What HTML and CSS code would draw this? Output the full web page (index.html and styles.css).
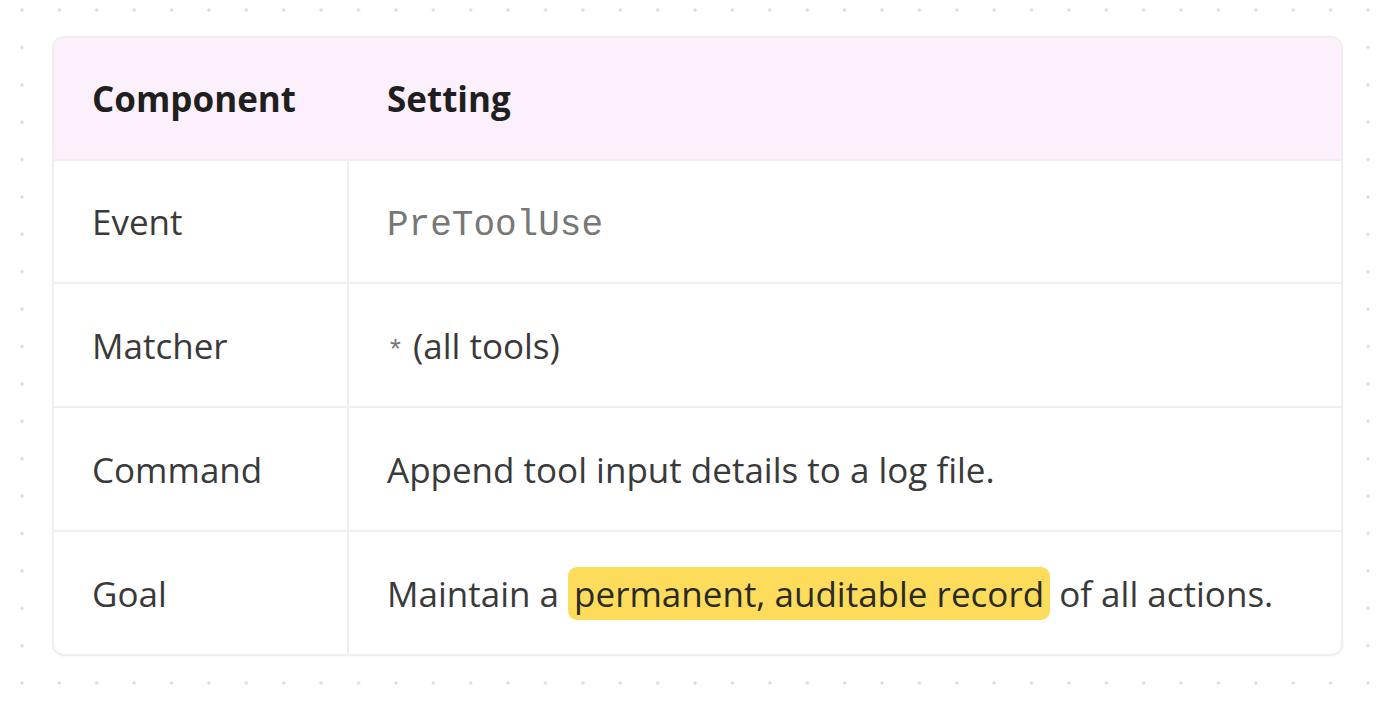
FILE: index.html
```html
<!DOCTYPE html>
<html lang="en">
<head>
    <meta charset="UTF-8">
    <meta name="viewport" content="width=device-width, initial-scale=1.0">
    <title>Hook Settings</title>
    <link rel="stylesheet" href="styles.css">
</head>
<body>
    <div class="board">
        <table class="settings">
            <thead>
                <tr>
                    <th class="col-name">Component</th>
                    <th>Setting</th>
                </tr>
            </thead>
            <tbody>
                <tr>
                    <td class="col-name">Event</td>
                    <td><code>PreToolUse</code></td>
                </tr>
                <tr>
                    <td class="col-name">Matcher</td>
                    <td><code class="star">*</code> (all tools)</td>
                </tr>
                <tr>
                    <td class="col-name">Command</td>
                    <td>Append tool input details to a log file.</td>
                </tr>
                <tr>
                    <td class="col-name">Goal</td>
                    <td>Maintain a <mark>permanent, auditable record</mark> of all actions.</td>
                </tr>
            </tbody>
        </table>
    </div>
</body>
</html>
```

FILE: styles.css
```css
body {
    margin: 0;
    padding: 0;
    font-family: "Open Sans", Arial, sans-serif;
    color: #333333;
    background-color: #ffffff;
    background-image: radial-gradient(circle, #dcdcdc 1.4px, transparent 1.8px);
    background-size: 37.4px 37.4px;
    background-position: 3.3px -8.7px;
    height: 704px;
    overflow: hidden;
}
.board {
    padding: 36px 0 0 52px;
}
.settings {
    width: 1291px;
    border-collapse: separate;
    border-spacing: 0;
    border: 2px solid #efefef;
    border-radius: 12px;
    background: #ffffff;
    overflow: hidden;
    box-shadow: 0 1px 3px rgba(0, 0, 0, 0.04);
}
.settings th,
.settings td {
    padding: 0 38px;
    text-align: left;
    vertical-align: middle;
    font-size: 35px;
    box-sizing: border-box;
}
.settings th {
    background: #fdf0fd;
    font-weight: 700;
    color: #1f1f1f;
    height: 121px;
}
.settings td {
    height: 124px;
    border-top: 2px solid #efefef;
    color: #3a3a3a;
}
.settings tbody tr:first-child td {
    height: 123px;
}
.settings .col-name {
    width: 295px;
}
.settings td.col-name {
    border-right: 2px solid #efefef;
}
code {
    font-family: "Liberation Mono", "Courier New", monospace;
    font-size: 36px;
    color: #777777;
}
code.star {
    font-size: 28px;
}
mark {
    background: #fddc5c;
    color: #2a2a2a;
    border-radius: 9px;
    padding: 3px 6px;
}
```
